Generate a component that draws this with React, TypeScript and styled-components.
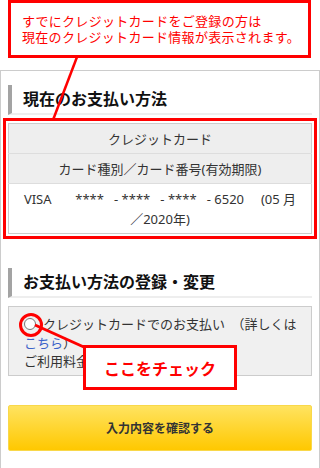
import styled, { createGlobalStyle } from "styled-components";

const GlobalStyle = createGlobalStyle`
  html, body {
    margin: 0;
    padding: 0;
    background: #fff;
  }
  body {
    font-family: "Noto Sans", "Noto Sans CJK JP", sans-serif;
    color: #333;
  }
`;

const RED = "#ff0000";

const Page = styled.div`
  position: relative;
  width: 320px;
  height: 468px;
  overflow: hidden;
`;

const Callout = styled.div`
  box-sizing: border-box;
  margin: 0 9px 0 8px;
  height: 58px;
  border: 3px solid ${RED};
  padding: 0 0 0 11px;
  display: flex;
  flex-direction: column;
  justify-content: center;
  color: ${RED};
  font-size: 13px;
  letter-spacing: 0.3px;
  line-height: 16px;
  white-space: nowrap;
`;

const Frame = styled.div`
  box-sizing: border-box;
  width: 320px;
  margin-top: 12px;
  border: 1px solid #ccc;
  padding: 14px 7px 18px 7px;
`;

const SectionTitle = styled.h2<{ $spaced?: boolean }>`
  box-sizing: border-box;
  margin: ${(p) => (p.$spaced ? "34px" : "0")} 0 0 0;
  height: 30px;
  border-left: 4px solid #a3a3a3;
  border-bottom: 2px solid #eee;
  padding-left: 11px;
  font-size: 16px;
  font-weight: bold;
  line-height: 28px;
  color: #111;
`;

const CardTable = styled.table`
  width: 100%;
  margin-top: 8px;
  border-collapse: collapse;
  border: 1px solid #ccc;
  outline: 3px solid ${RED};
  outline-offset: 2px;
  font-size: 13px;
  color: #333;
`;

const HeadCell = styled.th`
  height: 29px;
  padding: 0;
  background: #eee;
  border-bottom: 1px solid #ddd;
  font-weight: normal;
  text-align: center;
`;

const ValueCell = styled.td`
  height: 49px;
  padding: 0;
  background: #fff;
  text-align: center;
  line-height: 20px;
  white-space: pre;
`;

const OptionBox = styled.div`
  box-sizing: border-box;
  margin-top: 8px;
  height: 70px;
  border: 1px solid #ccc;
  background: #f0f0f0;
  padding: 8px 4px 0 15px;
  font-size: 13px;
  line-height: 18.5px;
  color: #333;
`;

const OptionLine = styled.div`
  display: flex;
  align-items: center;
  white-space: nowrap;
`;

const Radio = styled.span`
  position: relative;
  flex: none;
  box-sizing: border-box;
  width: 12px;
  height: 12px;
  margin-right: 7px;
  border: 1px solid #777;
  border-radius: 50%;
  background: #fff;

  &::after {
    content: "";
    position: absolute;
    left: -6px;
    top: -6px;
    width: 18px;
    height: 18px;
    border: 3px solid ${RED};
    border-radius: 50%;
  }
`;

const TextLink = styled.span`
  color: #3b63c9;
`;

const ConfirmButton = styled.button`
  display: block;
  box-sizing: border-box;
  width: 100%;
  height: 46px;
  margin-top: 29px;
  border: 1px solid #f9d84a;
  border-radius: 2px;
  background: linear-gradient(#ffe360, #ffc800);
  font-family: inherit;
  font-size: 12px;
  font-weight: bold;
  color: #333;
  cursor: pointer;
`;

const Annotation = styled.div`
  position: absolute;
  left: 83px;
  top: 345px;
  box-sizing: border-box;
  width: 154px;
  height: 45px;
  border: 3px solid ${RED};
  background: #fff;
  display: flex;
  align-items: center;
  justify-content: center;
  color: ${RED};
  font-size: 16px;
  font-weight: bold;
`;

const Connectors = styled.svg`
  position: absolute;
  left: 0;
  top: 0;
  pointer-events: none;
`;

export default function App() {
  return (
    <>
      <GlobalStyle />
      <Page>
        <Callout>
          <div>すでにクレジットカードをご登録の方は</div>
          <div>現在のクレジットカード情報が表示されます。</div>
        </Callout>
        <Frame>
          <SectionTitle>現在のお支払い方法</SectionTitle>
          <CardTable>
            <tbody>
              <tr>
                <HeadCell>クレジットカード</HeadCell>
              </tr>
              <tr>
                <HeadCell>カード種別／カード番号(有効期限)</HeadCell>
              </tr>
              <tr>
                <ValueCell>
                  {"VISA       ****   - ****   - ****   - 6520     (05 月\n／2020年)"}
                </ValueCell>
              </tr>
            </tbody>
          </CardTable>
          <SectionTitle $spaced>お支払い方法の登録・変更</SectionTitle>
          <OptionBox>
            <OptionLine>
              <Radio />
              クレジットカードでのお支払い　（詳しくは
            </OptionLine>
            <div>
              <TextLink>こちら</TextLink>）
            </div>
            <div>ご利用料金をカードでお支払い</div>
          </OptionBox>
          <ConfirmButton>入力内容を確認する</ConfirmButton>
        </Frame>
        <Connectors width="320" height="468">
          <line x1="77" y1="57" x2="53" y2="120" stroke={RED} strokeWidth="2.5" />
          <line x1="35" y1="325" x2="86" y2="348" stroke={RED} strokeWidth="3" />
        </Connectors>
        <Annotation>ここをチェック</Annotation>
      </Page>
    </>
  );
}
